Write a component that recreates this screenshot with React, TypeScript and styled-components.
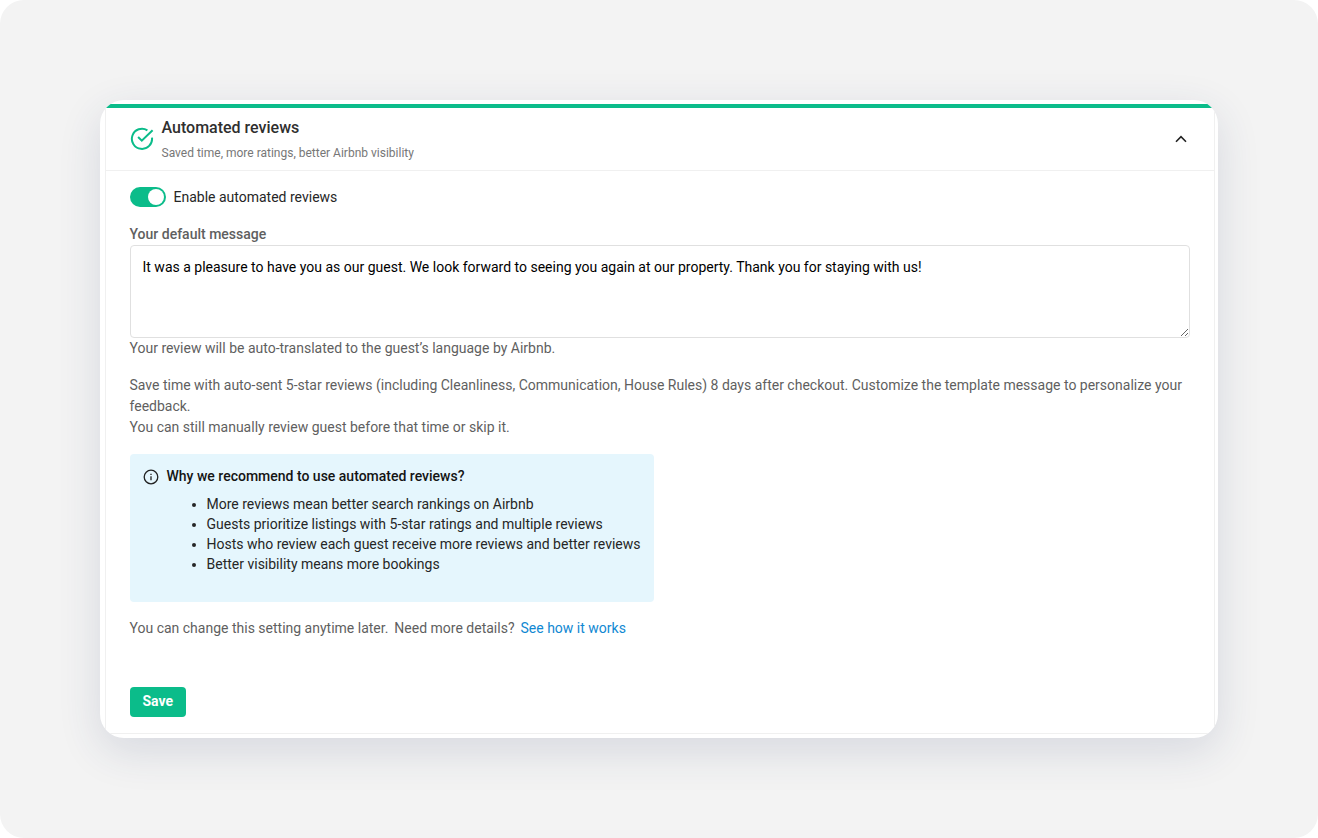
import React from "react";
import styled, { createGlobalStyle } from "styled-components";

const GlobalStyle = createGlobalStyle`
  * { box-sizing: border-box; }
  body { margin: 0; background: #fff; font-family: Roboto, "Liberation Sans", sans-serif; }
`;

const Stage = styled.main`
  width: 1318px;
  height: 838px;
  padding: 100px;
  border-radius: 24px;
  background: #f3f3f3;
`;

const Card = styled.section`
  width: 1118px;
  height: 638px;
  padding: 4px 3px 4px 5px;
  border-radius: 24px;
  overflow: hidden;
  background: #fff;
  box-shadow: 0 13px 43px rgba(42, 58, 108, 0.14);
`;

const Panel = styled.div`
  height: 630px;
  border: 1px solid #f0f0f0;
  border-top: 4px solid #0bbc8a;
`;

const Header = styled.header`
  display: flex;
  align-items: center;
  height: 63px;
  padding: 0 25px 0 24px;
  border-bottom: 1px solid #f0f0f0;
`;

const Heading = styled.div`
  flex: 1;
  margin-left: 7.5px;
`;

const Title = styled.h1`
  margin: 0;
  font-size: 16px;
  line-height: 24px;
  font-weight: 500;
  color: #2f2f2f;
`;

const Subtitle = styled.p`
  margin: 3px 0 0;
  font-size: 12px;
  line-height: 20px;
  color: #777;
`;

const Body = styled.div`
  display: flex;
  flex-direction: column;
  align-items: flex-start;
  padding: 16px 24px 0;
  font-size: 14px;
  line-height: 21px;
  color: #5f5f5f;
`;

const ToggleRow = styled.label`
  display: flex;
  align-items: center;
  gap: 7.5px;
  height: 20px;
  color: #262626;
`;

const Switch = styled.span`
  display: flex;
  justify-content: flex-end;
  width: 36px;
  height: 20px;
  padding: 2px;
  border-radius: 10px;
  background: #0bbc8a;
`;

const Knob = styled.span`
  width: 16px;
  height: 16px;
  border-radius: 50%;
  background: #fff;
`;

const FieldLabel = styled.label`
  margin: 16px 0 0 -0.5px;
  height: 22px;
  line-height: 22px;
  font-weight: 500;
`;

const Message = styled.textarea`
  display: block;
  width: 1060px;
  height: 93px;
  padding: 10px 11.5px;
  border: 1px solid #e0e0e0;
  border-radius: 4px;
  outline: none;
  font: 14px/22px Roboto, "Liberation Sans", sans-serif;
  color: #000;
  background: #fff;
`;

const Text = styled.p<{ $top: number }>`
  margin: ${(p) => p.$top}px 0 0 -0.5px;
`;

const Notice = styled.aside`
  width: 524px;
  height: 148px;
  margin-top: 16px;
  padding: 12px 13px;
  border-radius: 4px;
  background: #e5f6fd;
  color: #262626;
`;

const NoticeTitle = styled.h2`
  display: flex;
  align-items: center;
  gap: 7.5px;
  margin: 0;
  font-size: 14px;
  line-height: 21px;
  font-weight: 500;
  color: #141414;
`;

const Reasons = styled.ul`
  margin: 7px 0 0;
  padding-left: 63.5px;
  line-height: 20px;
`;

const Question = styled.span`
  margin-left: 6px;
`;

const Link = styled.a`
  margin-left: 6px;
  color: #1088d2;
`;

const SaveButton = styled.button`
  width: 56px;
  height: 30px;
  margin-top: 48px;
  padding: 0 0.5px 2px 0;
  border: 0;
  border-radius: 4px;
  background: #0bbc8a;
  color: #fff;
  font: 700 14px/20px Roboto, "Liberation Sans", sans-serif;
`;

const CheckIcon = () => (
  <svg width="24" height="24" viewBox="0 0 24 24" fill="none" stroke="#0bbc8a" strokeWidth="2">
    <path d="M17.4 3.3A10.1 10.1 0 1 0 22 10.6" />
    <path d="M8.1 10l3.7 3.7L22.6 3.3" />
  </svg>
);

const ChevronIcon = () => (
  <svg width="16" height="16" viewBox="0 0 16 16" fill="none" stroke="#222" strokeWidth="1.6">
    <path d="M3 10.7L8 5.7l5 5" />
  </svg>
);

const InfoIcon = () => (
  <svg width="16" height="16" viewBox="0 0 16 16" fill="none" stroke="#222" strokeWidth="1.3">
    <circle cx="8" cy="8" r="6.8" />
    <path d="M8 7.2v4M8 4.8v1.3" />
  </svg>
);

const reasons = [
  "More reviews mean better search rankings on Airbnb",
  "Guests prioritize listings with 5-star ratings and multiple reviews",
  "Hosts who review each guest receive more reviews and better reviews",
  "Better visibility means more bookings",
];

export default function App() {
  return (
    <>
      <GlobalStyle />
      <Stage>
        <Card>
          <Panel>
            <Header>
              <CheckIcon />
              <Heading>
                <Title>Automated reviews</Title>
                <Subtitle>Saved time, more ratings, better Airbnb visibility</Subtitle>
              </Heading>
              <ChevronIcon />
            </Header>
            <Body>
              <ToggleRow>
                <Switch>
                  <Knob />
                </Switch>
                Enable automated reviews
              </ToggleRow>
              <FieldLabel htmlFor="message">Your default message</FieldLabel>
              <Message
                id="message"
                defaultValue="It was a pleasure to have you as our guest. We look forward to seeing you again at our property. Thank you for staying with us!"
              />
              <Text $top={0}>Your review will be auto-translated to the guest’s language by Airbnb.</Text>
              <Text $top={16}>
                Save time with auto-sent 5-star reviews (including Cleanliness, Communication, House Rules) 8 days
                after checkout. Customize the template message to personalize your feedback.
                <br />
                You can still manually review guest before that time or skip it.
              </Text>
              <Notice>
                <NoticeTitle>
                  <InfoIcon />
                  Why we recommend to use automated reviews?
                </NoticeTitle>
                <Reasons>
                  {reasons.map((reason) => (
                    <li key={reason}>{reason}</li>
                  ))}
                </Reasons>
              </Notice>
              <Text $top={16}>
                You can change this setting anytime later.
                <Question>Need more details?</Question>
                <Link>See how it works</Link>
              </Text>
              <SaveButton>Save</SaveButton>
            </Body>
          </Panel>
        </Card>
      </Stage>
    </>
  );
}
